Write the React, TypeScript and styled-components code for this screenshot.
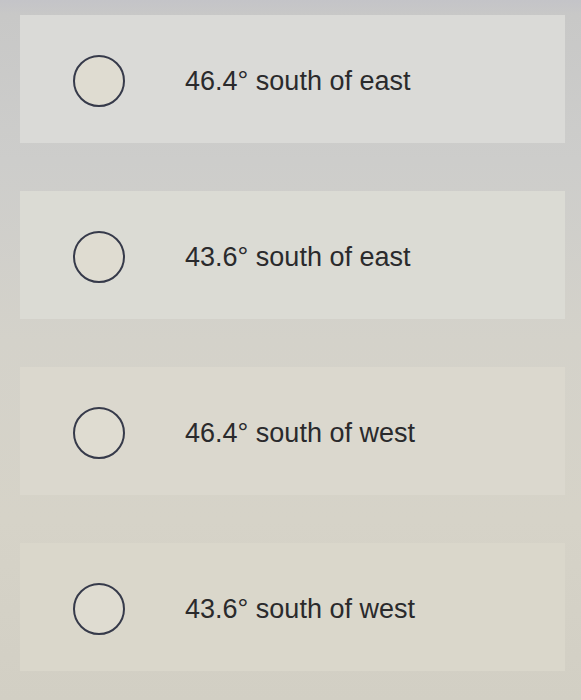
import React from "react";
import styled, { createGlobalStyle } from "styled-components";

const GlobalStyle = createGlobalStyle`
  html, body {
    margin: 0;
    padding: 0;
    background: #cfceca;
  }
  body {
    font-family: "Liberation Sans", Arial, sans-serif;
  }
`;

type Option = { label: string; bg: string };

const options: Option[] = [
  { label: "46.4\u00b0 south of east", bg: "#dadad7" },
  { label: "43.6\u00b0 south of east", bg: "#dbdbd4" },
  { label: "46.4\u00b0 south of west", bg: "#dbd8ce" },
  { label: "43.6\u00b0 south of west", bg: "#dad7cb" },
];

const Page = styled.div`
  width: 581px;
  height: 700px;
  overflow: hidden;
  background: linear-gradient(
    180deg,
    #c4c4c8 0px,
    #c8c8c7 15px,
    #cdcdcb 160px,
    #d4d2ca 340px,
    #d6d3c8 520px,
    #d2cfc4 700px
  );
  padding-top: 15px;
  box-sizing: border-box;
`;

const List = styled.div`
  display: flex;
  flex-direction: column;
  gap: 48px;
  padding: 0 16px 0 20px;
`;

const Row = styled.div<{ $bg: string }>`
  height: 128px;
  display: flex;
  align-items: center;
  background: ${(p) => p.$bg};
  padding-top: 4px;
  box-sizing: border-box;
`;

const Radio = styled.span`
  width: 48px;
  height: 48px;
  margin-left: 53px;
  border: 2.5px solid #363a4a;
  border-radius: 50%;
  background: #dfdcd1;
  flex-shrink: 0;
`;

const Label = styled.span`
  margin-left: 60px;
  font-size: 27px;
  color: #2a2a2c;
`;

export default function App() {
  return (
    <Page>
      <GlobalStyle />
      <List>
        {options.map((o) => (
          <Row key={o.label} $bg={o.bg}>
            <Radio />
            <Label>{o.label}</Label>
          </Row>
        ))}
      </List>
    </Page>
  );
}
